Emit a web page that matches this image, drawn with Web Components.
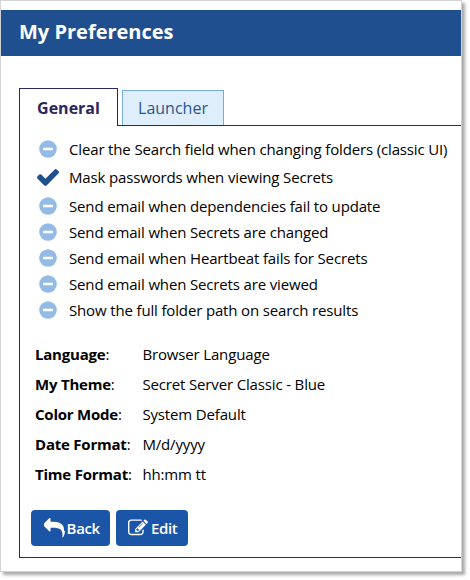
<!DOCTYPE html>
<html lang="en"><head><meta charset="utf-8"><title>My Preferences</title>
<style>html,body{margin:0;background:#fff;min-height:580px}body{font-family:"Open Sans","Noto Sans",sans-serif;color:#000}</style></head>
<body>
<pref-window heading="My Preferences">
<pref-tabs slot="tabs"><pref-tab active>General</pref-tab><pref-tab>Launcher</pref-tab></pref-tabs>
<pref-panel>
<pref-list>
<pref-option style="margin-bottom:2px">Clear the Search field when changing folders (classic UI)</pref-option>
<pref-option on style="margin-bottom:3px">Mask passwords when viewing Secrets</pref-option>
<pref-option>Send email when dependencies fail to update</pref-option>
<pref-option>Send email when Secrets are changed</pref-option>
<pref-option>Send email when Heartbeat fails for Secrets</pref-option>
<pref-option>Send email when Secrets are viewed</pref-option>
<pref-option>Show the full folder path on search results</pref-option>
</pref-list>
<pref-fields>
<pref-field label="Language">Browser Language</pref-field>
<pref-field label="My Theme">Secret Server Classic - Blue</pref-field>
<pref-field label="Color Mode">System Default</pref-field>
<pref-field label="Date Format">M/d/yyyy</pref-field>
<pref-field label="Time Format">hh:mm tt</pref-field>
</pref-fields>
<pref-actions><pref-button icon="reply">Back</pref-button><pref-button icon="edit">Edit</pref-button></pref-actions>
</pref-panel>
</pref-window>
<script>
const define=(name,render)=>customElements.define(name,class extends HTMLElement{
  constructor(){super();this.attachShadow({mode:'open'});}
  connectedCallback(){this.shadowRoot.innerHTML=render(this);}
});
const paths={
check:'M1671 566q0 40-28 68l-724 724-136 136q-28 28-68 28t-68-28l-136-136-362-362q-28-28-28-68t28-68l136-136q28-28 68-28t68 28l294 295 656-657q28-28 68-28t68 28l136 136q28 28 28 68z',
reply:'M1792 1120q0 166-127 451-3 7-10.5 24t-13.5 30-13 22q-12 17-28 17-15 0-23.5-10t-8.5-25q0-9 2.5-26.5t2.5-23.5q5-68 5-123 0-112-19.5-200.5t-54-153.5-89-112-117-78.5-146.5-47-170-22.5-201-6h-224v256q0 26-19 45t-45 19-45-19l-512-512q-19-19-19-45t19-45l512-512q19-19 45-19t45 19 19 45v256h224q713 0 875 403 53 134 53 333z',
edit:'M888 1184l116-116-152-152-116 116v56h96v96h56zm440-720q-16-16-33 1l-350 350q-17 17-1 33t33-1l350-350q17-17 1-33zm80 594v190q0 119-84.5 203.5t-203.5 84.5h-832q-119 0-203.5-84.5t-84.5-203.5v-832q0-119 84.5-203.5t203.5-84.5h832q63 0 117 25 15 7 18 23 3 17-9 29l-49 49q-14 14-32 8-23-6-45-6h-832q-66 0-113 47t-47 113v832q0 66 47 113t113 47h832q66 0 113-47t47-113v-126q0-13 9-22l64-64q15-15 35-7t20 29zm-96-738l288 288-672 672h-288v-288zm444 132l-92 92-288-288 92-92q28-28 68-28t68 28l152 152q28 28 28 68t-28 68z'};
define('pref-window',e=>`<style>
:host{display:flex;flex-direction:column;box-sizing:border-box;width:462px;height:572px;padding-top:9px;border:1px solid #d3d3d3;background:#fff;box-shadow:3px 3px 3px rgba(0,0,0,.34)}
header{height:46px;box-sizing:border-box;padding-left:18px;background:#204f8f;color:#fff;font:700 20px/44px "Open Sans",sans-serif}
main{margin:32px 0 13px 18px;flex:1;display:flex;flex-direction:column}
</style><header>${e.getAttribute('heading')}</header><main><slot name="tabs"></slot><slot></slot></main>`);
define('pref-tabs',()=>`<style>:host{display:flex;align-items:flex-end;gap:4px;height:37px;position:relative;z-index:1}</style><slot></slot>`);
define('pref-tab',()=>`<style>
:host{display:block;box-sizing:border-box;width:102px;height:35px;border:1px solid #76abdf;border-bottom:0;background:#dfeefb;color:#2c5590;font-size:16px;line-height:34px;text-align:center}
:host([active]){width:99px;height:38px;margin-bottom:-1px;border-color:#2b2560;background:#fff;color:#2b2560;font-weight:700;line-height:38px}
</style><slot></slot>`);
define('pref-panel',()=>`<style>:host{display:flex;flex-direction:column;flex:1;box-sizing:border-box;border:1px solid #2b2560;border-right:0}</style><slot></slot>`);
define('pref-list',()=>`<style>:host{display:block;padding:10px 0 0 16px}</style><slot></slot>`);
define('pref-option',e=>`<style>
:host{display:flex;align-items:center;height:26px;font-size:15px;line-height:26px;letter-spacing:-.15px;white-space:nowrap}
i{flex:none;display:flex;justify-content:center;width:23px;margin-right:10px}svg{display:block}
</style><i>${e.hasAttribute('on')
?`<svg width="22" height="17" viewBox="121 334 1550 1188" preserveAspectRatio="none"><path fill="#204f8f" d="${paths.check}"/></svg>`
:`<svg width="18" height="18" viewBox="0 0 18 18"><circle cx="9" cy="9" r="8.8" fill="#94bbe6"/><rect x="4" y="7.7" width="10" height="2.6" rx=".5" fill="#fff"/></svg>`}</i><slot></slot>`);
define('pref-fields',()=>`<style>:host{display:block;padding:16px 0 0 15px}</style><slot></slot>`);
define('pref-field',e=>`<style>
:host{display:grid;grid-template-columns:107.4px 1fr;height:30px;font-size:15px;line-height:30px;letter-spacing:-.15px;white-space:nowrap}
b{letter-spacing:-.22px}
</style><span><b>${e.getAttribute('label')}</b>:</span><span><slot></slot></span>`);
define('pref-actions',()=>`<style>:host{display:flex;gap:6px;padding:21px 0 0 11px}</style><slot></slot>`);
define('pref-button',e=>{const r=e.getAttribute('icon')==='reply';return `<style>
:host{display:flex;align-items:center;box-sizing:border-box;width:${r?79:72}px;height:36px;padding-left:${r?12.6:12}px;border-radius:4px;background:#1b55a8;color:#fff;font-size:15px;font-weight:600;letter-spacing:-.35px}
svg{display:block;margin-right:${r?2:3}px}
</style><svg width="${r?21:20}" height="${r?21:20}" viewBox="0 0 1792 1792"><path fill="#fff" d="${paths[r?'reply':'edit']}"/></svg><slot></slot>`});
</script>
</body></html>
